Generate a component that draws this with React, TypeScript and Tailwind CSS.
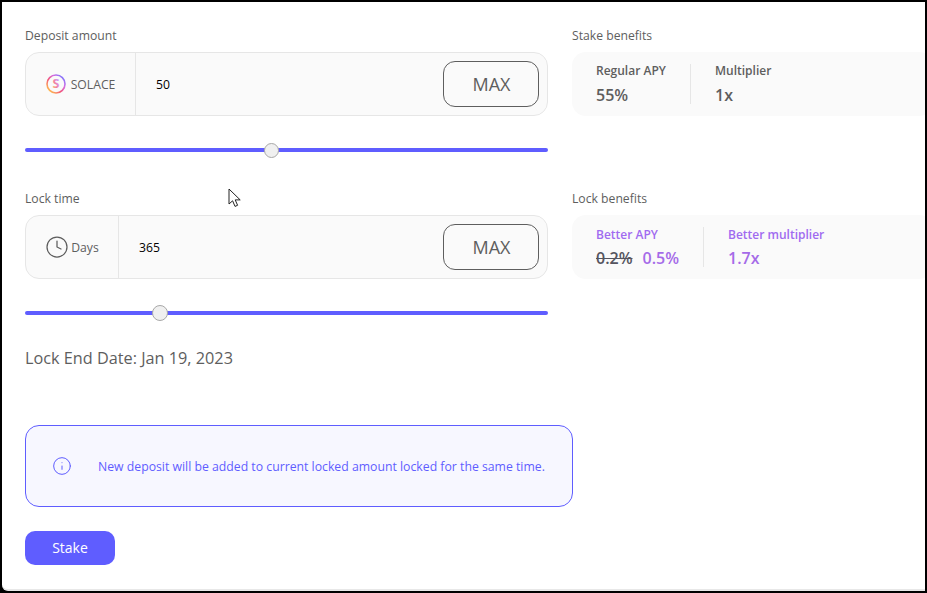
import { Clock, Info } from 'lucide-react';

function Slider({ thumb }: { thumb: string }) {
  return (
    <div className="relative mt-8 h-1 w-[523px] rounded-full bg-[#5f5dff]">
      <div className={`absolute rounded-full border border-[#a8a8a8] bg-[#f0f0f0] ${thumb}`} />
    </div>
  );
}

function AmountInput({ icon, label, value, cellWidth }: { icon: React.ReactNode; label: string; value: string; cellWidth: string }) {
  return (
    <div className="flex h-16 w-[523px] items-center rounded-[14px] border border-[#e6e6e6] bg-[#fafafa]">
      <div className={`flex h-full items-center justify-center gap-[5px] border-r border-[#e6e6e6] text-[12.2px] text-[#5e5e5e] ${cellWidth}`}>
        {icon}
        <span className="pt-[3px]">{label}</span>
      </div>
      <div className="flex-1 pt-[3px] pl-5 text-[12.2px] text-black">{value}</div>
      <button className="mr-2 h-[46px] w-[96px] rounded-[12px] border border-[#5e5e5e] pl-px text-lg text-[#5e5e5e]">MAX</button>
    </div>
  );
}

function SolaceLogo() {
  return (
    <svg width="20" height="20" viewBox="0 0 20 20">
      <defs>
        <linearGradient id="solace" x1="0.1" y1="0.9" x2="0.9" y2="0.1">
          <stop offset="0" stopColor="#ffc04d" />
          <stop offset="0.4" stopColor="#f2557a" />
          <stop offset="0.7" stopColor="#d56be0" />
          <stop offset="1" stopColor="#7d78ff" />
        </linearGradient>
      </defs>
      <circle cx="10" cy="10" r="9" fill="none" stroke="url(#solace)" strokeWidth="1.6" />
      <text x="10" y="14.4" textAnchor="middle" fontSize="12.5" fontWeight="700" fill="url(#solace)" opacity="0.75">S</text>
    </svg>
  );
}

export default function App() {
  return (
    <div className="h-[593px] w-[927px] overflow-hidden bg-black pt-[2px] pr-[2px] pb-[2px] pl-[2px] font-['Open_Sans',sans-serif]">
      <div className="relative h-full overflow-hidden rounded-bl-[6px] border-b-2 border-[#e8e8e8] bg-white pt-[25px] pl-[23px]">
        <div className="flex gap-6">
          <div className="w-[523px]">
            <div className="mb-[8px] h-[17px] text-[12.2px] font-medium leading-[17px] text-[#5e5e5e]">Deposit amount</div>
            <AmountInput icon={<SolaceLogo />} label="SOLACE" value="50" cellWidth="w-[110px]" />
            <Slider thumb="-top-[5px] left-[239px] h-[15px] w-[15px]" />
          </div>
          <div className="flex-1">
            <div className="mb-[8px] h-[17px] text-[12.2px] font-medium leading-[17px] text-[#5e5e5e]">Stake benefits</div>
            <div className="-mr-2 flex h-16 items-center rounded-[14px] bg-[#fafafa] pl-6">
              <div className="h-[40px] w-[95px] border-r border-[#e6e6e6]">
                <div className="-mt-[2px] text-xs font-semibold leading-[17px] text-[#5e5e5e]">Regular APY</div>
                <div className="mt-[5px] text-base font-semibold leading-[22px] text-[#5e5e5e]">55%</div>
              </div>
              <div className="h-[40px] pl-6">
                <div className="-mt-[2px] text-xs font-semibold leading-[17px] text-[#5e5e5e]">Multiplier</div>
                <div className="mt-[5px] text-base font-semibold leading-[22px] text-[#5e5e5e]">1x</div>
              </div>
            </div>
          </div>
        </div>

        <div className="mt-[38px] flex gap-6">
          <div className="w-[523px]">
            <div className="mb-[8px] h-[17px] text-[12.2px] font-medium leading-[17px] text-[#5e5e5e]">Lock time</div>
            <AmountInput icon={<Clock className="-mr-[3px]" size={24} strokeWidth={1.25} />} label="Days" value="365" cellWidth="w-[93px]" />
            <Slider thumb="-top-[6px] left-[127px] h-[16px] w-[16px]" />
          </div>
          <div className="flex-1">
            <div className="mb-[8px] h-[17px] text-[12.2px] font-medium leading-[17px] text-[#5e5e5e]">Lock benefits</div>
            <div className="-mr-2 flex h-16 items-center rounded-[14px] bg-[#fafafa] pl-6">
              <div className="h-[40px] w-[108px] border-r border-[#e6e6e6]">
                <div className="-mt-px text-xs font-semibold leading-[17px] text-[#a06bf0]">Better APY</div>
                <div className="mt-[4px] flex gap-[10px] text-base font-semibold leading-[22px]">
                  <span className="text-[#55555f] line-through">0.2%</span>
                  <span className="text-[#a56be8]">0.5%</span>
                </div>
              </div>
              <div className="h-[40px] pl-6">
                <div className="-mt-px text-xs font-semibold leading-[17px] text-[#a06bf0]">Better multiplier</div>
                <div className="mt-[4px] text-base font-semibold leading-[22px] text-[#a56be8]">1.7x</div>
              </div>
            </div>
          </div>
        </div>

        <div className="mt-[32px] text-[16.25px] leading-[22px] text-[#5e5e5e]">Lock End Date: Jan 19, 2023</div>

        <div className="mt-[56px] flex h-[82px] w-[548px] items-center rounded-[14px] border border-[#5f5dff] bg-[#f7f7ff] pl-[26px] text-[12.25px] font-medium text-[#5f5dff]">
          <Info size={20} strokeWidth={1.2} />
          <span className="ml-[26px] pt-[3px]">New deposit will be added to current locked amount locked for the same time.</span>
        </div>

        <button className="mt-6 h-[34px] w-[90px] rounded-[10px] bg-[#5f5dff] text-sm font-medium text-white">Stake</button>

        <svg className="absolute top-[186px] left-[226px]" width="14" height="20" viewBox="0 0 14 20">
          <path d="M1 1v15l3.6-3.2 2.4 5.6 2.6-1.1-2.4-5.4h5z" fill="#fff" stroke="#222" strokeWidth="1" />
        </svg>
      </div>
    </div>
  );
}
